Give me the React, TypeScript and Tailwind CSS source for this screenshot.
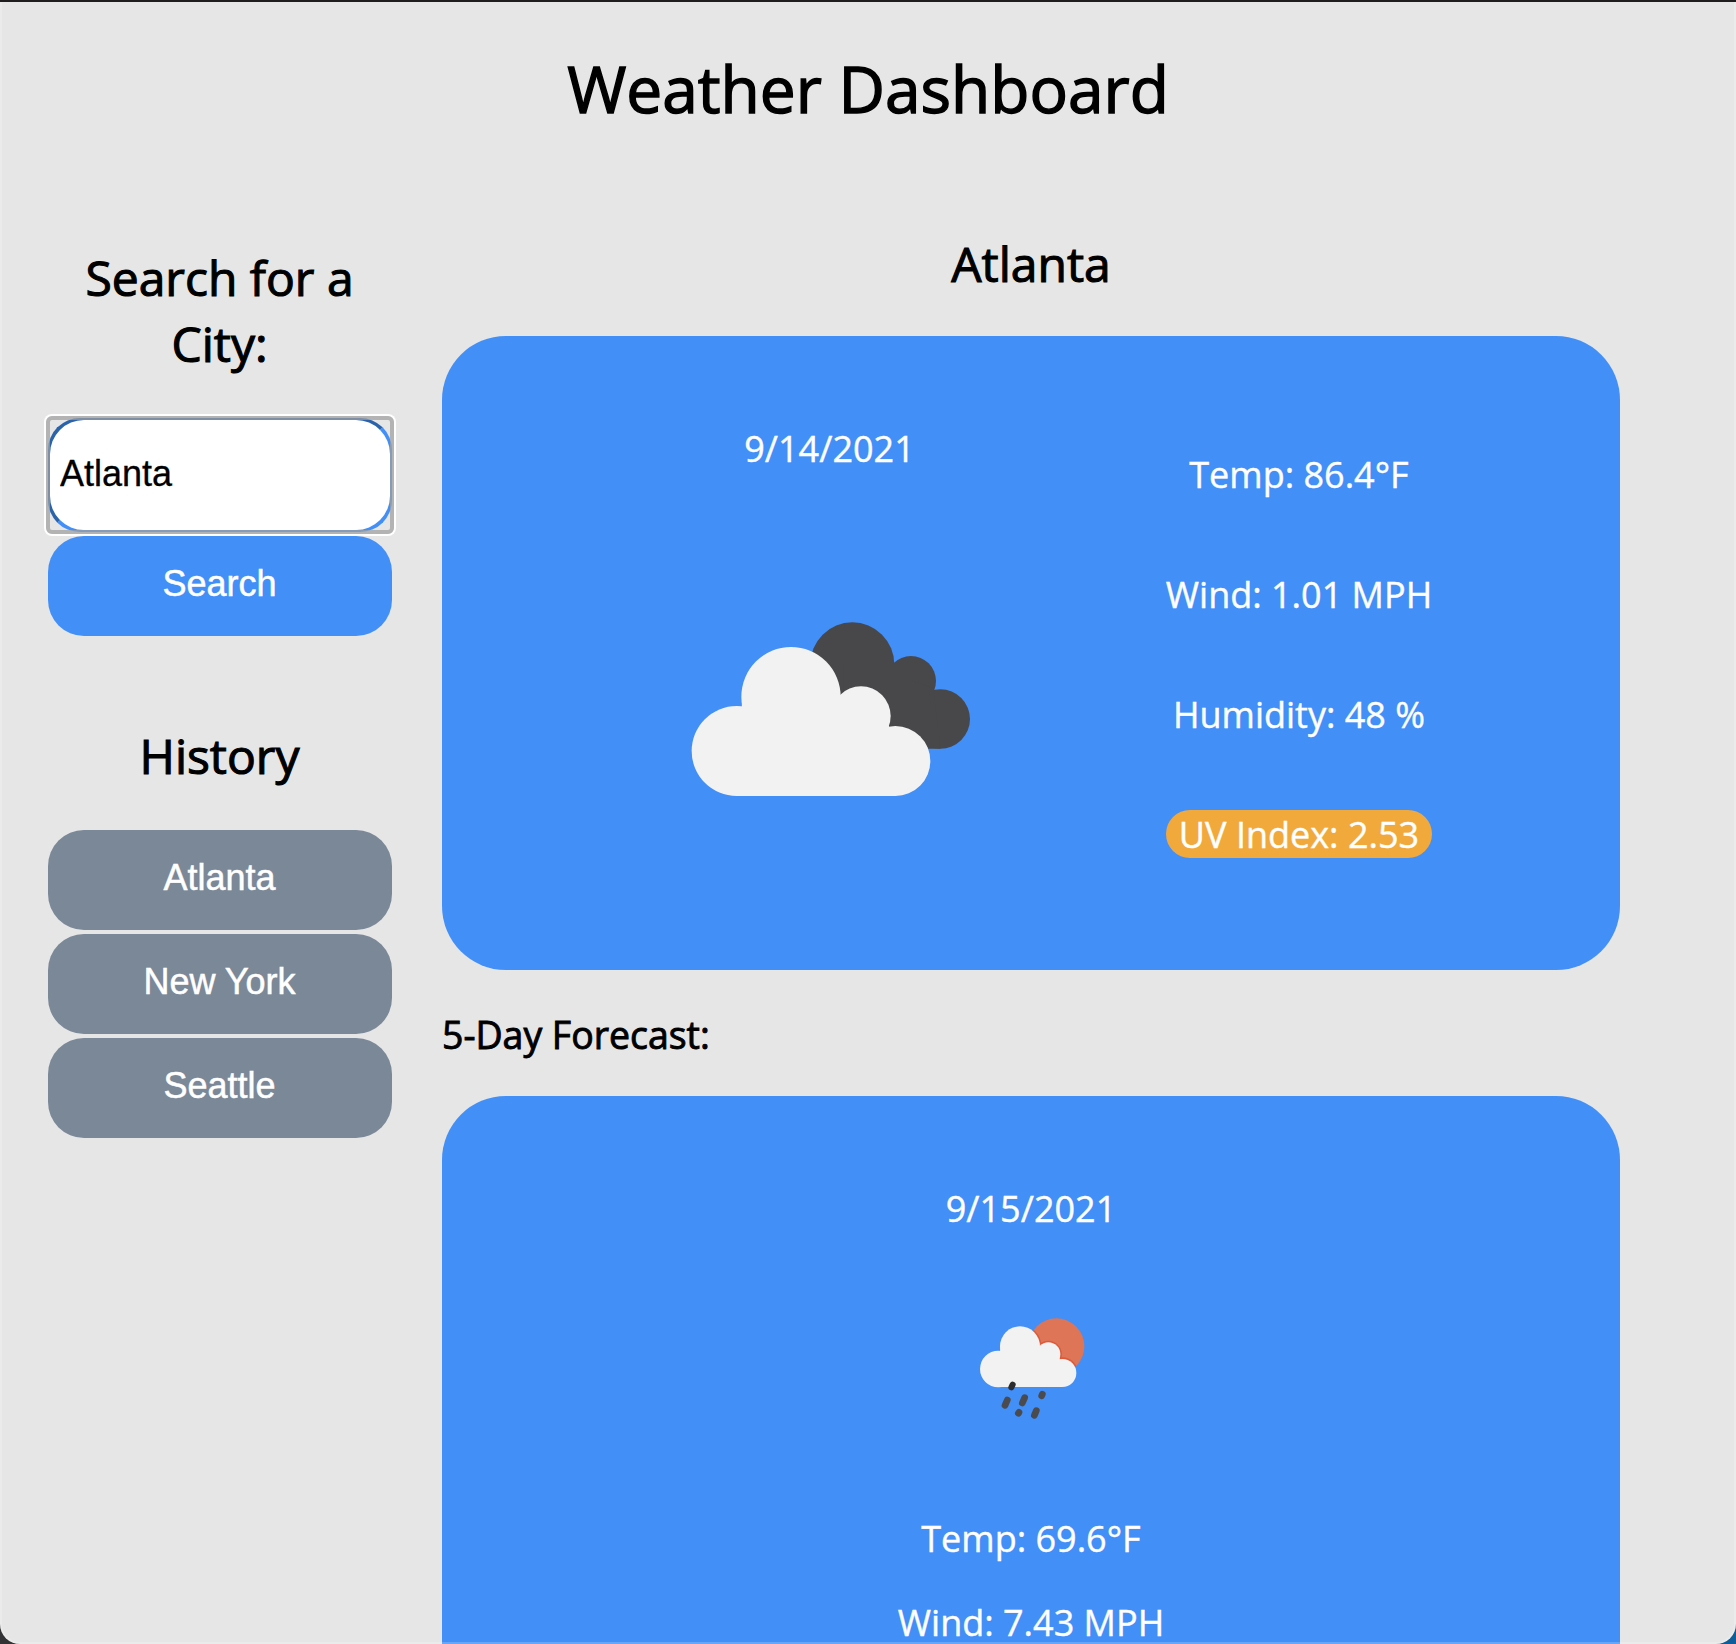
const history = ['Atlanta', 'New York', 'Seattle'];

function CloudsIcon() {
  return (
    <svg width="320" height="220" viewBox="0 0 960 660" className="block">
      <g fill="#48484a">
        <circle cx="547" cy="193" r="126" />
        <circle cx="723" cy="243" r="75" />
        <circle cx="811" cy="357" r="89" />
        <path d="M520 190H673L720 240L790 265L811 446H520Z" />
      </g>
      <g fill="#f2f2f2">
        <circle cx="363" cy="290" r="149" />
        <circle cx="200" cy="453" r="135" />
        <circle cx="573" cy="348" r="89" />
        <circle cx="676" cy="483" r="105" />
        <path d="M217 290H512L600 300L657 378L676 588H200Z" />
      </g>
    </svg>
  );
}

function RainIcon() {
  return (
    <svg width="150" height="150" viewBox="0 0 450 450" className="block">
      <defs>
        <clipPath id="sun">
          <circle cx="289" cy="169" r="84" />
        </clipPath>
      </defs>
      <circle cx="289" cy="169" r="84" fill="#dd7556" />
      <g clipPath="url(#sun)" fill="none" stroke="#dc5a3a" strokeWidth="9">
        <circle cx="180" cy="169" r="60" />
        <circle cx="265" cy="193" r="36" />
        <circle cx="307" cy="248" r="42" />
      </g>
      <g fill="#f2f2f2">
        <circle cx="180" cy="169" r="60" />
        <circle cx="115" cy="237" r="55" />
        <circle cx="265" cy="193" r="36" />
        <circle cx="307" cy="249" r="42" />
        <path d="M121 170H240L275 175L299 206L307 291H115Z" />
      </g>
      <g stroke="#4b4b4e" strokeWidth="20" strokeLinecap="round">
        <path d="M158 284L154 292" stroke="#2c2c2e" strokeWidth="18" />
        <path d="M142 330L135 346" />
        <path d="M194 323L187 339" />
        <path d="M247 313L245 317" />
        <path d="M177 367L175 370" />
        <path d="M229 362L223 376" />
      </g>
    </svg>
  );
}

export default function App() {
  return (
    <div className="h-[1644px] overflow-hidden bg-[linear-gradient(90deg,#333335_50%,#0e5c98_50%)] font-['Open_Sans',sans-serif] text-[36px] leading-[44px] text-black">
      <div className="relative h-full overflow-hidden rounded-b-[20px] border-t-2 border-[#1f1d1e] bg-[#e6e6e6]">
        <h1 className="mt-[43px] text-center text-[64px] leading-[88px] [-webkit-text-stroke:1.4px_black]">Weather Dashboard</h1>
        <div className="flex items-start">
          <aside className="ml-[48px] mt-[112px] w-[344px]">
            <h2 className="mr-px px-6 text-center text-[48px] leading-[66px] [-webkit-text-stroke:1.1px_black]">Search for a City:</h2>
            <div className="relative mt-[41px] h-[114px] rounded-[32px] border-[17px] border-[#428ff8] border-l-[#2b63ab] border-t-[#2b63ab]">
              <input
                defaultValue="Atlanta"
                className="absolute -inset-[15px] h-[110px] w-[340px] rounded-[34px] bg-white pb-[2px] pl-[10px] font-['Liberation_Sans',Arial,sans-serif] outline-none [-webkit-text-stroke:0.3px_black]"
              />
              <div className="pointer-events-none absolute -inset-[19px] rounded-[6px] border-4 border-[#a0a0a0b8] shadow-[0_0_0_2px_white]" />
            </div>
            <button className="mt-1 block h-[100px] w-full rounded-[36px] bg-[#428ff8] pb-[5px] pr-px font-['Liberation_Sans',Arial,sans-serif] text-white [-webkit-text-stroke:0.5px_white]">Search</button>
            <h2 className="mr-px mt-[87px] text-center text-[48px] leading-[66px] [-webkit-text-stroke:1.1px_black]">History</h2>
            <div className="mt-[41px] flex flex-col gap-1">
              {history.map((city) => (
                <button key={city} className="h-[100px] w-full rounded-[36px] bg-[#7b8898] pb-[5px] pr-px font-['Liberation_Sans',Arial,sans-serif] text-white [-webkit-text-stroke:0.5px_white]">
                  {city}
                </button>
              ))}
            </div>
          </aside>
          <main className="ml-[50px] mt-[98px] w-[1178px]">
            <h2 className="text-center text-[48px] leading-[66px] [-webkit-text-stroke:1.1px_black]">Atlanta</h2>
            <section className="mt-[39px] grid h-[634px] grid-cols-[472px_470px] rounded-[64px] bg-[#428ff8] pl-[150px] text-center text-white [-webkit-text-stroke:0.4px_white]">
              <div className="flex flex-col items-center pt-[91px]">
                <p className="ml-[3px]">9/14/2021</p>
                <div className="ml-1 mt-[129px]">
                  <CloudsIcon />
                </div>
              </div>
              <div className="flex flex-col items-center gap-[72px] pt-[114px] leading-[46px]">
                <p className="pt-[2px]">Temp: 86.4°F</p>
                <p className="pt-[2px]">Wind: 1.01 MPH</p>
                <p className="pt-[2px]">Humidity: 48 %</p>
                <p className="rounded-[24px] bg-[#f2a93c] px-[13px] pt-[2px]">UV Index: 2.53</p>
              </div>
            </section>
            <h3 className="mt-[43px] text-[37.44px] leading-[44px] [-webkit-text-stroke:0.9px_black]">5-Day Forecast:</h3>
            <section className="mt-[39px] flex h-[700px] flex-col items-center rounded-t-[64px] bg-[#428ff8] pt-[91px] text-white [-webkit-text-stroke:0.4px_white]">
              <p>9/15/2021</p>
              <div className="ml-2 mt-[59px]">
                <RainIcon />
              </div>
              <p className="mt-[77px]">Temp: 69.6°F</p>
              <p className="mt-[40px]">Wind: 7.43 MPH</p>
            </section>
          </main>
        </div>
        <div className="pointer-events-none absolute inset-0 rounded-b-[20px] border-x-2 border-b-2 border-white/20" />
      </div>
    </div>
  );
}
